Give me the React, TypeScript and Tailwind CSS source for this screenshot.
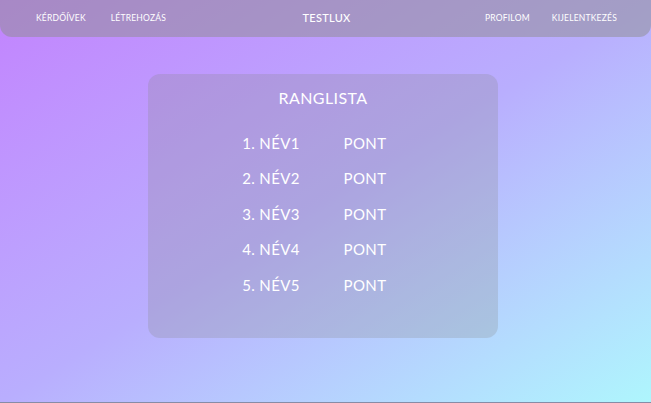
import React from 'react';

const rows = [
  { name: "1. NÉV1", score: "PONT" },
  { name: "2. NÉV2", score: "PONT" },
  { name: "3. NÉV3", score: "PONT" },
  { name: "4. NÉV4", score: "PONT" },
  { name: "5. NÉV5", score: "PONT" },
];

export default function App() {
  return (
    <div
      className="h-[403px] w-full bg-gradient-to-br from-[#c283fe] via-[#b9aefe] to-[#aef6fd] border-b border-[#878ca6] text-white"
      style={{ fontFamily: "'Lato', 'Noto Sans', sans-serif" }}
    >
      {/* navbar */}
      <nav className="h-[37px] bg-[#8d8d8d]/50 rounded-b-xl flex items-center pl-9 pr-[34px] text-[8.5px] tracking-wide">
        <div className="flex-1 flex gap-[25px]">
          <span>KÉRDŐÍVEK</span>
          <span>LÉTREHOZÁS</span>
        </div>
        <span className="text-[11px] font-medium tracking-wide">TESTLUX</span>
        <div className="flex-1 flex justify-end gap-[22px]">
          <span>PROFILOM</span>
          <span>KIJELENTKEZÉS</span>
        </div>
      </nav>

      <div className="flex justify-center pt-[37px] pr-[5px]">
        <div className="w-[350px] h-[264px] rounded-xl bg-[#878787]/25 flex flex-col pt-[12px]">
          <h2 className="text-[16px] leading-6 tracking-wide text-center">RANGLISTA</h2>
          <div className="mt-[15px] ml-[88px] grid grid-cols-[70px_70px] gap-x-[24px] text-[15px] tracking-wide">
            {rows.map((r) => (
              <React.Fragment key={r.name}>
                <span className="h-[35.5px] flex items-center justify-center">{r.name}</span>
                <span className="h-[35.5px] flex items-center justify-center">{r.score}</span>
              </React.Fragment>
            ))}
          </div>
        </div>
      </div>
    </div>
  );
}
